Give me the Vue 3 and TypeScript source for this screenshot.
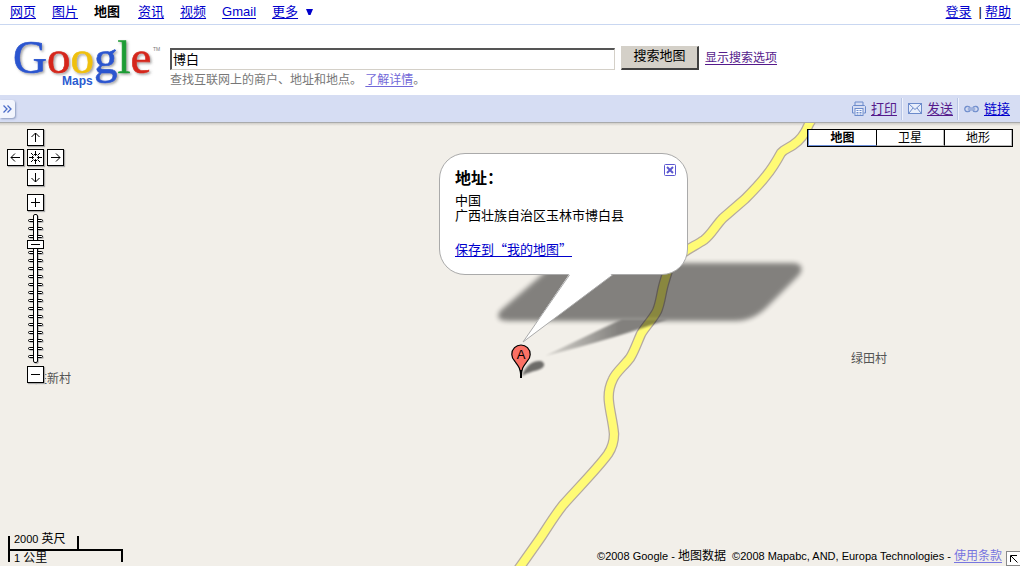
<script setup lang="ts">
import { ref } from 'vue'

const tabs = ['网页', '图片', '地图', '资讯', '视频', 'Gmail', '更多']
const query = ref('博白')
const mapTypes = ['地图', '卫星', '地形']
const activeType = ref('地图')
const zoom = ref(3)
const zoomTicks = Array.from({ length: 18 }, (_, i) => 7 + i * 8)
const road =
  'M813 117 L809 124 C805 134 801 140 793 145 C789 148 784 149 781 153 C775 164 771 170 766 176 C759 185 753 191 745 199 L723 218 C716 225 711 235 704 240 C695 246 685 250 678 257 C669 264 667 273 665 280 C661 292 661 302 657 311 C653 319 645 327 641 334 C637 343 634 352 630 358 C624 366 616 372 613 379 C609 387 608 394 609 402 C610 412 613 422 614 434 C614 442 612 448 608 454 C598 468 577 489 563 505 C552 519 546 530 539 540 L515 574'
</script>

<template>
  <div class="page">
    <nav class="topnav">
      <div class="links">
        <template v-for="tab in tabs" :key="tab">
          <b v-if="tab === '地图'">{{ tab }}</b>
          <a v-else href="#">{{ tab }}</a>
        </template>
        <svg class="caret" width="7" height="7" viewBox="0 0 7 7"><path d="M0 0H7L4.5 6H2.5Z" fill="#00c" /></svg>
      </div>
      <div class="account"><a href="#">登录</a><span>|</span><a href="#">帮助</a></div>
    </nav>

    <header class="head">
      <svg class="logo" width="148" height="60" viewBox="0 0 148 60" role="img" aria-label="Google Maps">
        <defs>
          <filter id="logoShadow" x="-10%" y="-10%" width="120%" height="130%">
            <feDropShadow dx="1.5" dy="1.5" stdDeviation="1" flood-color="#555" flood-opacity=".55" />
          </filter>
        </defs>
        <text class="wordmark" x="0" y="40" filter="url(#logoShadow)"><tspan fill="#2a55cf" stroke="#2a55cf">G</tspan><tspan fill="#d5281b" stroke="#d5281b">o</tspan><tspan fill="#efc010" stroke="#efc010">o</tspan><tspan fill="#2a55cf" stroke="#2a55cf">g</tspan><tspan fill="#1d9c35" stroke="#1d9c35">l</tspan><tspan fill="#d5281b" stroke="#d5281b">e</tspan></text>
        <text class="product" x="49" y="52">Maps</text>
        <text class="tm" x="140" y="18">TM</text>
      </svg>
      <form class="search" @submit.prevent>
        <div class="row">
          <input v-model="query" type="text" aria-label="搜索地图" />
          <button type="submit">搜索地图</button>
          <a class="visited" href="#">显示搜索选项</a>
        </div>
        <p>查找互联网上的商户、地址和地点。 <a href="#">了解详情</a>。</p>
      </form>
    </header>

    <div class="toolbar">
      <button class="expand" type="button" aria-label="展开">
        <svg width="9" height="8" viewBox="0 0 9 8" fill="none" stroke="#4a6cc8" stroke-width="1.3"><path d="M.5 .5L4 4L.5 7.5M4.5 .5L8 4L4.5 7.5" /></svg>
      </button>
      <div class="actions">
        <a class="visited" href="#">
          <svg width="14" height="16" viewBox="0 0 14 16" fill="none" stroke="#6c8bcb">
            <path d="M3 5V1H11V5M2.5 12H.5V5.5L1.5 4.5H12.5L13.5 5.5V12H11.5" />
            <rect x="3" y="7.500" width="8" height="7" fill="#f4f7ff" />
            <path d="M4.500 9.500H9.500M4.500 11.500H9.500M4.500 13H9.500" stroke-dasharray="2 1" />
          </svg><span>打印</span>
        </a>
        <a class="visited" href="#">
          <svg width="14" height="11" viewBox="0 0 14 11" fill="#e8eefb" stroke="#6c8bcb">
            <rect x=".5" y=".5" width="13" height="10" /><path d="M1 1L7 6.500L13 1M1 10L5 5M13 10L9 5" fill="none" />
          </svg><span>发送</span>
        </a>
        <a href="#">
          <svg width="15" height="8" viewBox="0 0 16 8" fill="none" stroke="#6c8bcb" stroke-width="1.300">
            <path d="M6.500 2.500C5.500 .5 1 .3 .8 4C1 7.700 5.500 7.500 6.500 5.500M9.500 2.500C10.500 .5 15 .3 15.200 4C15 7.700 10.500 7.500 9.500 5.500" /><path d="M4 3H12M4 5H12" stroke-width="1" />
          </svg><span>链接</span>
        </a>
      </div>
    </div>

    <main class="map">
      <div class="scene">
        <svg class="layer" width="1020" height="443" viewBox="0 123 1020 443">
          <defs>
            <filter id="soft" x="-10%" y="-20%" width="120%" height="140%"><feGaussianBlur stdDeviation="2.500" /></filter>
            <filter id="softer" x="-20%" y="-30%" width="140%" height="160%"><feGaussianBlur stdDeviation="1.300" /></filter>
            <linearGradient id="fade" x1="0" x2="1"><stop offset="0" stop-opacity=".25" /><stop offset=".6" /></linearGradient>
          </defs>
          <path :d="road" fill="none" stroke="#b5aaa0" stroke-width="10.500" />
          <path :d="road" fill="none" stroke="#fffb75" stroke-width="8" />
          <g opacity=".46">
            <path filter="url(#soft)" d="M560 263H794Q806 265 799 275L769 305Q754 321 735 321H508Q494 321 500 311L543 274Q552 264 560 263Z" />
            <path filter="url(#softer)" fill="url(#fade)" d="M545 356L622 319H668Q620 337 545 356Z" />
          </g>
          <path filter="url(#softer)" opacity=".55" d="M522 376C525 366 533 360 541 361C546 363 545 368 538 370C531 372 527 373 522 376Z" />
        </svg>
        <span class="place west">庄新村</span>
        <span class="place east">绿田村</span>

        <section class="bubble">
          <h2>地址：</h2>
          <p>中国<br />广西壮族自治区玉林市博白县</p>
          <a href="#">保存到“我的地图”</a>
          <button type="button" aria-label="关闭">
            <svg width="12" height="12" viewBox="0 0 12 12" fill="none" stroke="#5b57d0"><rect x=".5" y=".5" width="11" height="11" rx="1" /><path d="M3 3L9 9M9 3L3 9" stroke-width="2" /></svg>
          </button>
        </section>

        <svg class="layer over" width="1020" height="443" viewBox="0 123 1020 443">
          <path d="M570 273L523 342L613 273Z" fill="#fff" />
          <path d="M569.500 275L523 342L612.500 275" fill="#fff" stroke="#aaa" />
          <path d="M521 377.500C520.500 368 518.500 366 515 361.500C512.500 359 511.800 357 511.800 354.500C511.800 349 516 345 521 345C526 345 530.200 349 530.200 354.500C530.200 357 529.500 359 527 361.500C523.500 366 521.500 368 521 377.500Z" fill="#fb7064" stroke="#000" stroke-width="1.200" />
          <path d="M521 370V378" stroke="#000" stroke-width="2" />
          <text class="pin-letter" x="521" y="359" text-anchor="middle">A</text>
        </svg>
      </div>

      <div class="controls">
        <div class="pan">
          <button class="up" type="button" aria-label="向上"><svg viewBox="0 0 15 15"><path d="M7.500 12V3M3.500 7L7.500 3L11.500 7" /></svg></button>
          <button class="left" type="button" aria-label="向左"><svg viewBox="0 0 15 15"><path d="M12 7.500H3M7 3.500L3 7.500L7 11.500" /></svg></button>
          <button class="center" type="button" aria-label="返回"><svg viewBox="0 0 15 15"><path d="M7.500 1V5.500M7.500 14V9.500M1 7.500H5.500M14 7.500H9.500M3 3L5.500 5.500M12 3L9.500 5.500M3 12L5.500 9.500M12 12L9.500 9.500M6 4L7.500 5.500L9 4M6 11L7.500 9.500L9 11M4 6L5.500 7.500L4 9M11 6L9.500 7.500L11 9" /></svg></button>
          <button class="right" type="button" aria-label="向右"><svg viewBox="0 0 15 15"><path d="M3 7.500H12M8 3.500L12 7.500L8 11.500" /></svg></button>
          <button class="down" type="button" aria-label="向下"><svg viewBox="0 0 15 15"><path d="M7.500 3V12M3.500 8L7.500 12L11.500 8" /></svg></button>
        </div>
        <button type="button" aria-label="放大"><svg viewBox="0 0 15 15"><path d="M3 7.500H12M7.500 3V12" /></svg></button>
        <div class="slider">
          <svg width="17" height="149" viewBox="0 0 17 149" fill="#fff" stroke="#000">
            <rect v-for="y in zoomTicks" :key="y" x="1.500" :y="y - 1.500" width="14" height="2" rx="1" />
            <rect x="6.500" y=".5" width="4" height="148" rx="1.500" />
          </svg>
          <input v-model.number="zoom" type="range" min="0" max="17" aria-label="缩放" />
        </div>
        <button type="button" aria-label="缩小"><svg viewBox="0 0 15 15"><path d="M3 7.500H12" /></svg></button>
      </div>

      <div class="types">
        <button v-for="t in mapTypes" :key="t" type="button" :class="{ on: t === activeType }" @click="activeType = t">{{ t }}</button>
      </div>

      <div class="scale">
        <div class="feet">2000 <span>英尺</span></div>
        <div class="km">1 <span>公里</span></div>
      </div>

      <footer class="legal">
        <p>©2008 Google - <span>地图数据</span>&nbsp; ©2008 Mapabc, AND, Europa Technologies - <a href="#">使用条款</a></p>
        <button type="button" aria-label="鹰眼地图"><svg width="8" height="8" viewBox="0 0 8 8" fill="none" stroke="#000"><path d="M.5 7V.5H7M1 1L7.500 7.500" /></svg></button>
      </footer>
    </main>
  </div>
</template>

<style>
body {
  margin: 0;
}
</style>

<style scoped>
.page {
  box-sizing: border-box;
  min-height: 100vh;
  padding-bottom: 2px;
  display: flex;
  flex-direction: column;
  background: #fff;
  color: #000;
  font: 13px/16px "Liberation Sans", "Noto Sans CJK SC", sans-serif;
}
a {
  color: #00c;
  text-underline-offset: 2px;
}
a.visited {
  color: #551a8b;
}
button {
  padding: 0;
  font: inherit;
  color: #000;
}
.topnav {
  display: flex;
  justify-content: space-between;
  height: 24px;
  padding: 0 9px 0 10px;
  border-bottom: 1px solid #c9d7f1;
  align-items: center;
}
.links {
  display: flex;
  align-items: center;
  gap: 16px;
}
.links b {
  padding-right: 2px;
}
.caret {
  margin-left: -8px;
}
.account {
  display: flex;
  gap: 3px;
}
.account span {
  margin-left: 4px;
}
.head {
  display: flex;
  height: 70px;
  gap: 9px;
  padding-left: 13px;
}
.logo {
  margin-top: 8px;
  overflow: visible;
  flex: none;
}
.wordmark {
  font: 47px "Liberation Serif", serif;
  stroke-width: 0.6px;
}
.product {
  font: bold 12px "Liberation Sans", sans-serif;
  fill: #2a5bd0;
}
.tm {
  font: 5px "Liberation Sans", sans-serif;
  fill: #777;
}
.search {
  padding-top: 21px;
}
.row {
  display: flex;
  align-items: center;
  gap: 6px;
  height: 24px;
}
.row input {
  box-sizing: border-box;
  width: 445px;
  height: 22px;
  margin-top: 2px;
  padding: 0 1px 3px;
  border: 2px solid;
  border-color: #555 #d4d0c8 #d4d0c8 #555;
  border-width: 2px 1px 1px 2px;
  font: inherit;
  color: #000;
  outline: 0;
}
.row button {
  width: 78px;
  height: 24px;
  padding-bottom: 3px;
  background: #d4d0c8;
  border: 2px solid;
  border-color: #d4d0c8 #404040 #404040 #d4d0c8;
  border-width: 1px 2px 2px 1px;
}
.row a {
  font-size: 12px;
}
.search p {
  margin: 2px 0 0;
  font-size: 12px;
  color: #777;
}
.search p a {
  color: #7168d8;
}
.toolbar {
  display: flex;
  justify-content: space-between;
  align-items: center;
  height: 27px;
  background: #d6ddf3;
  border-bottom: 1px solid #a9aaab;
}
.expand {
  width: 15px;
  height: 18px;
  line-height: 8px;
  background: #f2f5fd;
  border: 0;
  border-radius: 0 3px 3px 0;
  box-shadow: 1px 1px 2px #8d9cc0;
}
.actions {
  display: flex;
  padding-right: 10px;
}
.actions a {
  display: flex;
  align-items: center;
  gap: 5px;
  height: 22px;
  padding-left: 6px;
  text-decoration: none;
}
.actions a + a {
  margin-left: 4px;
  border-left: 1px solid #b9c6e6;
  box-shadow: inset 1px 0 #eef2fc;
}
.actions span {
  text-decoration: underline;
}
.map {
  position: relative;
  flex: 1;
  min-height: 443px;
  overflow: hidden;
  background: linear-gradient(#d0cdc8, #f2efe9 3px);
}
.scene {
  position: absolute;
  top: 0;
  left: calc(50% - 510px);
}
.layer {
  display: block;
  overflow: visible;
}
.over {
  position: absolute;
  top: 0;
  left: 0;
  pointer-events: none;
}
.place {
  position: absolute;
  font-size: 12px;
  color: #555;
  white-space: nowrap;
}
.west {
  left: 35px;
  top: 248px;
}
.east {
  left: 851px;
  top: 228px;
}
.bubble {
  position: absolute;
  left: 439px;
  top: 30px;
  box-sizing: border-box;
  width: 249px;
  padding: 14px 15px 18px;
  border: 1px solid #aaa;
  border-radius: 26px;
  background: #fff;
  line-height: 15px;
  font-family: "Noto Sans CJK SC", sans-serif;
}
.bubble h2 {
  margin: 0;
  font-size: 16px;
  line-height: 18px;
}
.bubble p {
  margin: 6px 0 19px;
}
.bubble button {
  position: absolute;
  top: 10px;
  right: 11px;
  width: 12px;
  height: 12px;
  border: 0;
  background: none;
  line-height: 0;
}
.pin-letter {
  font: 13px "Liberation Sans", sans-serif;
}
.controls {
  position: absolute;
  left: 7px;
  top: 6px;
  display: flex;
  flex-direction: column;
  align-items: center;
}
.controls button {
  width: 17px;
  height: 17px;
  border: 1px solid #000;
  background: #fff;
  line-height: 0;
  box-shadow: 1px 1px 1px #aaa;
}
.controls button svg {
  width: 15px;
  height: 15px;
  fill: none;
  stroke: #000;
}
.pan {
  display: grid;
  grid-template: repeat(3, 17px) / repeat(3, 17px);
  grid-template-areas: ". up ." "left center right" ". down .";
  gap: 3px;
  margin-bottom: 8px;
}
.up {
  grid-area: up;
}
.left {
  grid-area: left;
}
.center {
  grid-area: center;
}
.right {
  grid-area: right;
}
.down {
  grid-area: down;
}
.slider {
  display: grid;
  place-items: center;
  margin: 3px 0;
}
.slider > * {
  grid-area: 1 / 1;
}
.slider svg {
  filter: drop-shadow(1px 1px 0 #bbb);
}
.slider input {
  z-index: 1;
  appearance: none;
  writing-mode: vertical-lr;
  width: 17px;
  height: 145px;
  margin: 0;
  background: none;
}
.slider input::-webkit-slider-thumb {
  appearance: none;
  box-sizing: border-box;
  width: 17px;
  height: 9px;
  border: 1px solid #000;
  background: linear-gradient(#000, #000) center / 9px 1px no-repeat #fff;
}
.types {
  position: absolute;
  top: 6px;
  right: 7px;
  display: flex;
  border: 1px solid #000;
}
.types button {
  width: 68px;
  height: 16px;
  border: 1px solid #bbb;
  border-width: 0 1px 1px 0;
  background: #fff;
  font-size: 12px;
  line-height: 14px;
}
.types button + button {
  border-left: 1px solid #000;
}
.types .on {
  border: 1px solid #6d8fd8;
  border-width: 0 0 1px 1px;
  font-weight: bold;
}
.scale {
  position: absolute;
  left: 8px;
  bottom: 4px;
  font-size: 11px;
  line-height: 13px;
}
.scale span,
.legal span,
.legal a {
  font-size: 12px;
}
.scale div {
  box-sizing: border-box;
  height: 13px;
  padding-left: 4px;
  border: 0 solid #000;
}
.scale .feet {
  width: 71px;
  border-width: 0 2px;
  line-height: 7px;
}
.scale .km {
  width: 115px;
  border-width: 2px 2px 0;
  line-height: 15px;
}
.legal {
  position: absolute;
  right: 0;
  bottom: 0;
  display: flex;
  align-items: flex-end;
  gap: 4px;
  font-size: 11px;
}
.legal p {
  margin: 0 0 2px;
  white-space: nowrap;
}
.legal a {
  color: #7776e0;
}
.legal button {
  width: 14px;
  height: 15px;
  border: 1px solid #888;
  border-right-width: 0;
  background: #fff;
  line-height: 0;
}
</style>
